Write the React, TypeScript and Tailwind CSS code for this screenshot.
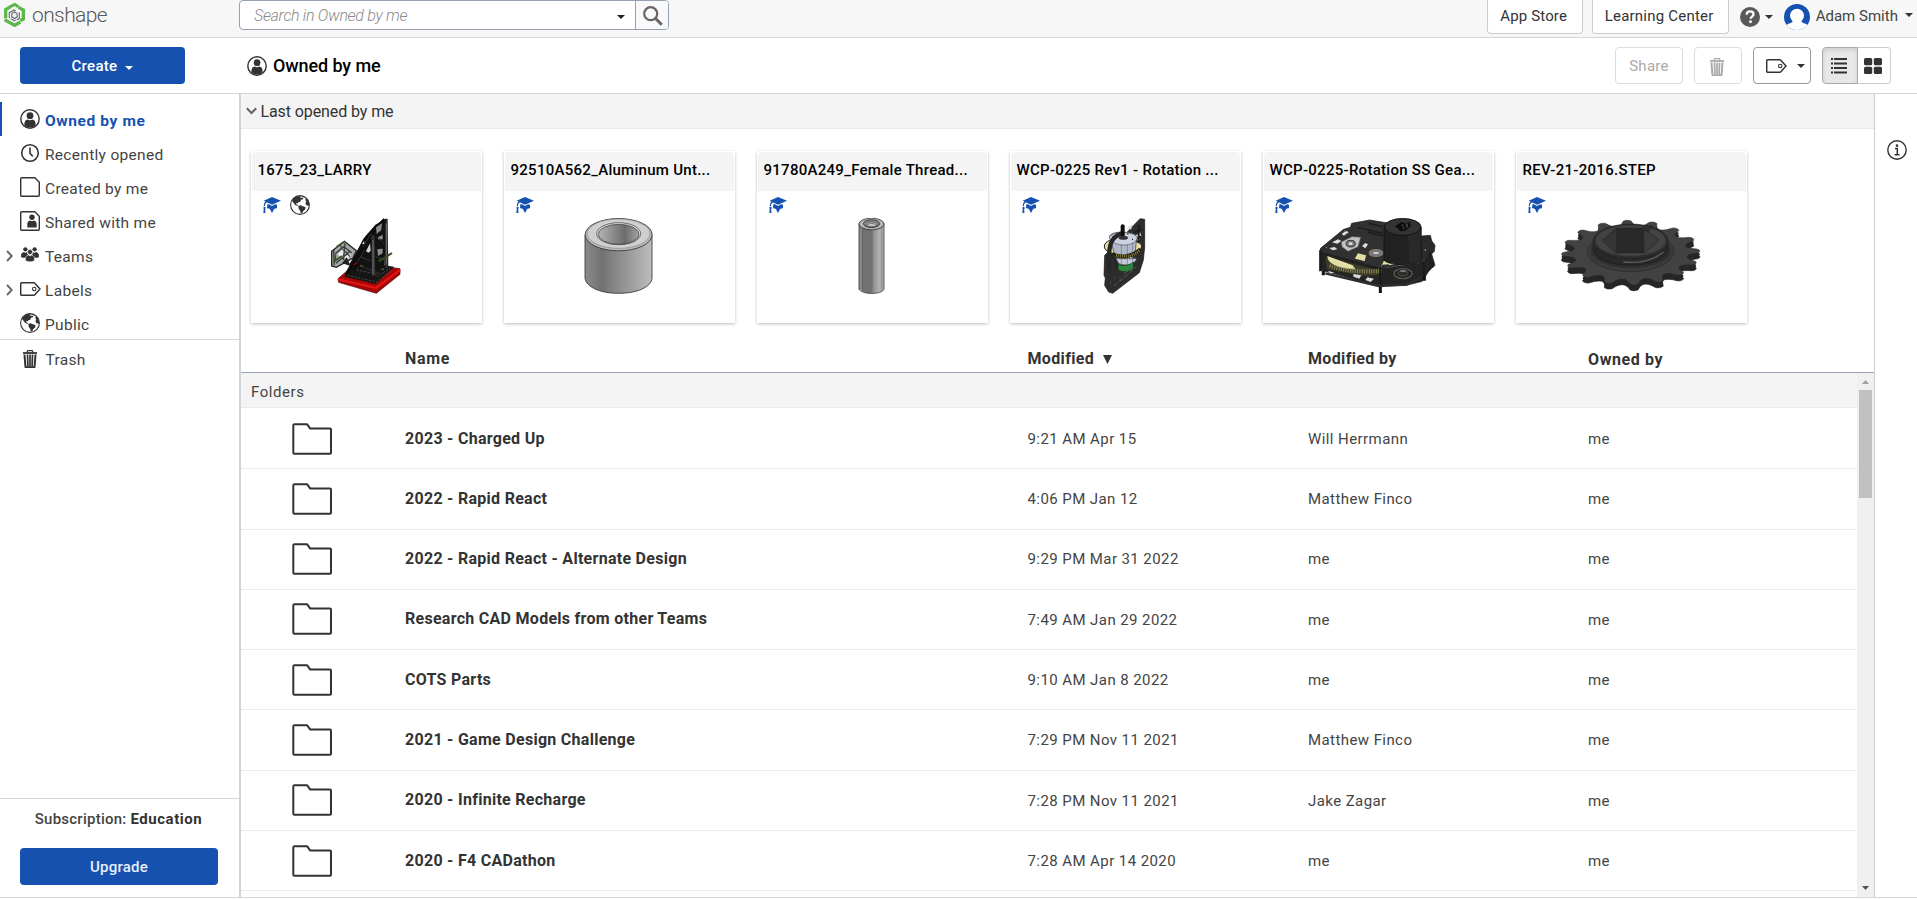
import type { ReactNode } from "react";

const FONT = "font-['Roboto','Liberation_Sans',sans-serif]";

/* ---------- icons ---------- */

function Caret({ className = "" }: { className?: string }) {
  return (
    <svg viewBox="0 0 8 4" className={`h-1 w-2 shrink-0 ${className}`} fill="currentColor">
      <path d="M0 0h8L4 4z" />
    </svg>
  );
}

function Logo() {
  return (
    <svg viewBox="0 0 63 73" className="h-[24.4px] w-[21px] shrink-0" fill="none">
      <path d="M5 46V20L20 11" stroke="#5cb947" strokeWidth="10" />
      <path d="M17 12L32 4l12 8" stroke="#5cb947" strokeWidth="9" />
      <path d="M44 13l14 8v27l-9 5" stroke="#5cb947" strokeWidth="10" />
      <path d="M2 50l30 17 17-10" stroke="#5cb947" strokeWidth="10" />
      <path d="M16 46V29l14-8 5 3M46 28v18l-8 5M20 47l11 6 4-2" stroke="#6b6c70" strokeWidth="3.500" />
      <path d="M31.500 27l8 4.500v10l-8 5-8-5v-10z" stroke="#6b6c70" strokeWidth="3.500" />
    </svg>
  );
}

function UserCircle() {
  return (
    <svg viewBox="0 0 20 20" className="size-5 shrink-0">
      <circle cx="10" cy="10" r="9.200" fill="none" stroke="#333" strokeWidth="1.400" />
      <circle cx="10" cy="6.700" r="3.400" fill="#333" />
      <path d="M4.300 16.200C4.300 12.600 5.600 11 7.600 10.600c1.500.9 3.300.9 4.800 0 2 .4 3.300 2 3.300 5.600C12.500 19.200 7.500 19.200 4.300 16.200z" fill="#333" />
    </svg>
  );
}

function Clock() {
  return (
    <svg viewBox="0 0 20 20" className="size-5 shrink-0" fill="none" stroke="#333">
      <circle cx="10" cy="10" r="8.300" strokeWidth="1.600" />
      <path d="M10 4.500v5.700l2.800 3.400" strokeWidth="1.600" />
    </svg>
  );
}

function Page({ children }: { children?: ReactNode }) {
  return (
    <svg viewBox="0 0 20 20" className="size-5 shrink-0">
      <path d="M1.700.7H14.800L19.300 5.200V18.300a1 1 0 0 1-1 1H1.700a1 1 0 0 1-1-1V1.700a1 1 0 0 1 1-1z" fill="none" stroke="#333" strokeWidth="1.400" />
      {children}
    </svg>
  );
}

function Teams() {
  return (
    <svg viewBox="0 0 54 46" className="h-[15.3px] w-5 shrink-0" fill="#333">
      <circle cx="13" cy="7" r="6.500" />
      <circle cx="41" cy="7" r="6.500" />
      <path d="M0 29c0-9 3-13 9-14l5 3 4-3c1 4 1 7 4 9-5 2-7 4-8 8-6 0-14 0-14-3z" />
      <path d="M54 29c0-9-3-13-9-14l-5 3-4-3c-1 4-1 7-4 9 5 2 7 4 8 8 6 0 14 0 14-3z" />
      <circle cx="27" cy="15" r="7.500" stroke="#fff" strokeWidth="1.500" />
      <path d="M13 40c0-10 3-15 9-16l5 3 5-3c6 1 9 6 9 16-6 6-22 6-28 0z" stroke="#fff" strokeWidth="1.500" />
    </svg>
  );
}

function Tag() {
  return (
    <svg viewBox="0 0 21 14" className="h-3.5 w-[21px] shrink-0" fill="none" stroke="#333">
      <path d="M1.700.8h12.100c.5 0 .9.200 1.200.6L20 7l-5 5.600c-.3.400-.7.600-1.200.6H1.700a1 1 0 0 1-1-1V1.800a1 1 0 0 1 1-1z" strokeWidth="1.500" />
      <circle cx="14.200" cy="7" r="1.700" strokeWidth="1.100" />
    </svg>
  );
}

function Globe() {
  return (
    <svg viewBox="0 0 20 20" className="size-5 shrink-0">
      <circle cx="10" cy="10" r="9.400" fill="#fff" stroke="#333" strokeWidth="1.100" />
      <path d="M3.400 3.600C5.500 1.600 8 .7 10.800.8l-1 1.600 1.900.3 1.900-.3-.8 1.900-1.800.5-.7 1.900-1.900.5-1 1.400-1.100-.4-.6.700 1.500.9 1.400.7-1.500.3-2-.8L3.700 8 2 5.900z" fill="#333" />
      <path d="M8.200 10.900l2.300-.7 2.500 1.100 2.600 1-.5 2.200-1.800 1.400-.9 2.100-1.600.6-.5-2.700-1.500-1.900z" fill="#333" />
      <path d="M16 2.900l-.7 2.200 1 1.600-.9 1.300.9 2.200 2.600.6c.8-3.200-.2-6-2.900-7.900z" fill="#333" />
    </svg>
  );
}

function Trash({ color = "#333" }: { color?: string }) {
  return (
    <svg viewBox="0 0 14 18" className="h-[18px] w-3.5 shrink-0" fill="none" stroke={color}>
      <path d="M4.300 2.400V1.300c0-.4.300-.7.700-.7h4c.4 0 .7.300.7.700v1.100" strokeWidth="1.200" />
      <path d="M0 3h14" strokeWidth="1.800" />
      <path d="M1.500 4.500l.9 12c0 .5.300.7.700.7h7.800c.4 0 .7-.2.700-.7l.9-12" strokeWidth="2" />
      <path d="M4.500 4.500l.4 12M7 4.500v12M9.500 4.500l-.4 12" strokeWidth="1.700" />
    </svg>
  );
}

function GradCap() {
  return (
    <svg viewBox="0 0 54 48" className="h-4 w-[18px] shrink-0" fill="#1651b0">
      <path d="M27 0l27 11-27 12L2 11z" />
      <path d="M13 22l5 0 9 5 9-5 6 1c0 7 1 10-1 11-3 1-6 0-8 3l-6 11-6-11c-2-3-5-2-8-3-2-1 0-5 0-12z" />
      <path d="M13 14C7 15 4 18 4 28" fill="none" stroke="#1651b0" strokeWidth="3.500" />
      <path d="M1.500 30h6v5l-1 3 1 10H1l1-10z" />
    </svg>
  );
}

function Chevron({ down = false }: { down?: boolean }) {
  return down ? (
    <svg viewBox="0 0 11 8" className="h-2 w-[11px] shrink-0" fill="none" stroke="#666" strokeWidth="2.100">
      <path d="M.8 1.200L5.500 6 10.200 1.200" />
    </svg>
  ) : (
    <svg viewBox="0 0 7 12" className="h-3 w-[7px] shrink-0" fill="none" stroke="#666" strokeWidth="1.900">
      <path d="M1 1l4.800 5L1 11" />
    </svg>
  );
}

function Folder() {
  return (
    <svg viewBox="0 0 40 32" className="h-8 w-10 shrink-0" fill="none" stroke="#333" strokeWidth="2" strokeLinejoin="round">
      <path d="M2.300 1.300H15.200L18.300 5.600H38a1 1 0 0 1 1 1V29.700a1 1 0 0 1-1 1H2.300a1 1 0 0 1-1-1V2.300a1 1 0 0 1 1-1z" />
    </svg>
  );
}

/* ---------- part thumbnails ---------- */

const thumb = "block h-[105px] w-full";

function RobotThumb() {
  return (
    <svg viewBox="63 384 693 315" className={thumb}>
      <path d="M324 566l56-48 130 18v17l-71 57-113-33z" fill="#a80505" stroke="#400" strokeWidth="2" />
      <path d="M324 568l114 26 72-54" fill="none" stroke="#e01414" strokeWidth="7" />
      <path d="M346 550l36-36 110 16-54 52-94-22z" fill="#161616" />
      <path d="M352 556l88 20 44-34M380 540l60 12M400 530l50 22M440 560l40-24" stroke="#5c5c5c" strokeWidth="2" fill="none" strokeDasharray="7 4" />
      <path d="M305 484l38-30 36 28-10 22-50 28-14-4z" fill="#a4a8a8" stroke="#222" strokeWidth="4" />
      <path d="M322 492l14-12 8 8-12 14zM342 500l16-10 6 8-14 8zM340 470l10 6-6 6z" fill="#eee" />
      <path d="M315 492l26-22 24 18M311 480l2 46M330 466l30 34M318 520l40-34M345 460l-5 50" stroke="#3a3a3a" strokeWidth="4" fill="none" />
      <path d="M310 516l26-18M320 470l20-13M316 494v20" stroke="#35521f" strokeWidth="5" />
      <path d="M336 520l26 8-12-26z" fill="#222" />
      <path d="M464 386l9 0 2 150-10-2z" fill="#2b2b2b" />
      <path d="M372 500l28-54 36-42 30-16v70l-2 76-34 4-72-16z" fill="#121212" />
      <path d="M350 552l62-112 52-52M370 540l58-104" stroke="#0c0c0c" strokeWidth="10" fill="none" />
      <path d="M438 412l18-12-2 20-14 12zM444 442l14-8v14h-14zM442 478l16-2v14l-14 8z" fill="#8d8d8d" />
      <path d="M408 484l12-24 2 22-6 6zM396 462l6-8 2 8z" fill="#d6d6d6" />
      <path d="M424 436l10 0 2 122-10-2z" fill="#303030" />
      <path d="M429 450v104M469 400v124" stroke="#808080" strokeWidth="2.500" />
      <path d="M398 470l26-40M380 520l24-40M442 440l20 20M436 500l28 10M390 500l30 12" stroke="#4a4a4a" strokeWidth="2" />
      <path d="M446 514l40-25" stroke="#304d1c" strokeWidth="6" />
      <path d="M454 540l8-4M390 526l10 4" stroke="#7a5a18" strokeWidth="4" />
      <path d="M372 524l10-6" stroke="#c00" strokeWidth="3" />
    </svg>
  );
}

function SpacerThumb() {
  return (
    <svg viewBox="822 384 693 315" className={thumb}>
      <defs>
        <linearGradient id="spacer-body">
          <stop offset="0" stopColor="#8a8a8a" />
          <stop offset=".25" stopColor="#727272" />
          <stop offset=".6" stopColor="#959595" />
          <stop offset="1" stopColor="#bdbdbd" />
        </linearGradient>
        <linearGradient id="spacer-bore">
          <stop offset="0" stopColor="#b5b5b5" />
          <stop offset=".65" stopColor="#6b6b6b" />
          <stop offset="1" stopColor="#a5a5a5" />
        </linearGradient>
      </defs>
      <path d="M1065 434V564C1068 592 1112 610 1166 610s98-18 100-46V434z" fill="url(#spacer-body)" stroke="#333" strokeWidth="2.500" />
      <ellipse cx="1166" cy="434" rx="100.500" ry="48.500" fill="#b9b9b9" stroke="#333" strokeWidth="2.500" />
      <ellipse cx="1166" cy="431" rx="94" ry="44" fill="#cfcfcf" stroke="#777" strokeWidth="1.500" />
      <ellipse cx="1166" cy="431" rx="66" ry="33" fill="#dedede" stroke="#333" strokeWidth="2" />
      <ellipse cx="1166" cy="433" rx="61" ry="30" fill="url(#spacer-bore)" stroke="#333" strokeWidth="2" />
    </svg>
  );
}

function StandoffThumb() {
  return (
    <svg viewBox="51 234 693 315" className={thumb}>
      <defs>
        <linearGradient id="standoff-right">
          <stop offset="0" stopColor="#8d8d8d" />
          <stop offset=".6" stopColor="#b2b2b2" />
          <stop offset="1" stopColor="#9d9d9d" />
        </linearGradient>
      </defs>
      <path d="M357 250L367 262v192l-10-6z" fill="#8b8b8b" />
      <path d="M366 260l32 10v190c-14 1-26-2-32-7z" fill="#727272" />
      <path d="M398 270l33-14v192c-6 8-20 12-33 12z" fill="url(#standoff-right)" />
      <path d="M357 250V448C365 464 425 465 432 448V250" fill="none" stroke="#3a3a3a" strokeWidth="2.500" />
      <path d="M367 264v190M398 270v190" stroke="#565656" strokeWidth="1.500" />
      <path d="M425 262v190" stroke="#7c7c7c" strokeWidth="1.500" />
      <ellipse cx="394.500" cy="252" rx="37.500" ry="17.500" fill="#b5b5b5" stroke="#333" strokeWidth="2.500" />
      <ellipse cx="394.500" cy="251" rx="24" ry="11.500" fill="#8f8f8f" stroke="#222" strokeWidth="2.500" />
      <ellipse cx="395" cy="253" rx="17" ry="7" fill="#c7c7c7" stroke="#444" strokeWidth="2" />
      <path d="M380 255c8-6 22-6 30 0" fill="none" stroke="#444" strokeWidth="2" />
    </svg>
  );
}

function RotationThumb() {
  return (
    <svg viewBox="810 234 693 315" className={thumb}>
      <path d="M1110 330l90-94 14 2v84l-4 38-12 38-80 62-12-4-12-20 2-22-4-8 2-60z" fill="#2d2d2d" stroke="#141414" strokeWidth="2" />
      <path d="M1188 286l12-10 4 12-10 18zM1158 268l20-18-4 18z" fill="#dcdcdc" />
      <path d="M1182 278l22-10M1186 296l18-6M1196 254v60" stroke="#1c1c1c" strokeWidth="6" />
      <path d="M1093 318c4-18 20-20 60-18 36 2 52 10 52 18 0 16-24 28-56 28-30 0-58-12-56-28z" fill="#e2dca2" stroke="#222" strokeWidth="3" />
      <path d="M1108 288c10-16 66-16 82 2l-4 46-18 38h-30l-14-30z" fill="#b1b8ca" stroke="#333" strokeWidth="2" />
      <path d="M1108 292c4-16 70-22 84 0-4 30-74 32-84 0z" fill="#ccd2e2" stroke="#555" strokeWidth="2" />
      <path d="M1128 356h50c16-4 14 6-2 16-14 4-32 4-40-2z" fill="#c4cadb" stroke="#444" strokeWidth="2" />
      <path d="M1144 312v60M1162 314v60M1178 308v60" stroke="#6d7384" strokeWidth="2" />
      <path d="M1116 342c26 12 60 10 86-14" fill="none" stroke="#26240f" strokeWidth="12" />
      <path d="M1128 346c24 6 50 4 70-14" fill="none" stroke="#b3ab62" strokeWidth="8" strokeDasharray="2 4" />
      <path d="M1134 372c14 8 32 6 46-6v20c-8 10-36 12-46 2z" fill="#2b8a3e" stroke="#123c1a" strokeWidth="2" />
      <path d="M1108 400V340c0-34 12-54 44-62" fill="none" stroke="#262626" strokeWidth="13" />
      <path d="M1120 348l12 40" stroke="#262626" strokeWidth="8" />
      <path d="M1148 259v30" stroke="#0d0d0d" strokeWidth="12" strokeLinecap="round" />
      <ellipse cx="1150" cy="293" rx="14" ry="6" fill="#333" />
      <path d="M1118 290h3M1176 298h3M1162 282h3" stroke="#222" strokeWidth="4" />
      <path d="M1122 438l66-56M1110 428h3M1124 412h3M1138 414h3M1152 400l30-22" stroke="#5e5e5e" strokeWidth="3" strokeDasharray="14 6" />
    </svg>
  );
}

function GearboxThumb() {
  return (
    <svg viewBox="69 234 693 315" className={thumb}>
      <path d="M545 288l26-2 4 16 10 14-2 18-8 8 10 34-18 16-30 6z" fill="#2a2a2a" stroke="#151515" strokeWidth="2" />
      <path d="M241 326l70-58 20-6 4-12 54-10 60 10v120l-30 30-170-40z" fill="#313131" stroke="#161616" strokeWidth="2" />
      <path d="M241 336l182 50 134-20 14-30v50l-24 38-48 12-80 2-178-48z" fill="#242424" stroke="#121212" strokeWidth="2" />
      <path d="M256 350l164 42v12l-50 4-110-20z" fill="#3d3c28" />
      <path d="M262 348l76 28 8 12c-40 0-84-14-84-40z" fill="#e3dfa4" />
      <path d="M270 376c30 14 90 22 156 16" fill="none" stroke="#8f8b58" strokeWidth="13" strokeDasharray="3 4" />
      <path d="M342 360l12-20 24 6-4 18zM426 374l6-12 24 10z" fill="#e3dfa4" />
      <path d="M264 392l20 6-14 2zM340 402l24 4-6 10-18-6zM382 412l20 4-10 10-16-6z" fill="#d9d9d9" />
      <path d="M276 307l18-9 10 5-12 8zM302 280l18-7 6 4-14 10zM268 324l16-3 8 7-14 3zM366 318l10-9 8 4-8 12z" fill="#dedede" />
      <path d="M304 306l32-16 26 2-8 28-30 14-18-14z" fill="#c4c4c4" stroke="#666" strokeWidth="2" />
      <ellipse cx="332" cy="311" rx="14" ry="10" fill="#777" stroke="#333" strokeWidth="3" />
      <ellipse cx="332" cy="311" rx="6" ry="4" fill="#ddd" />
      <ellipse cx="408" cy="339" rx="24" ry="14" fill="#7e776d" stroke="#2a2a2a" strokeWidth="3" />
      <ellipse cx="408" cy="339" rx="10" ry="5" fill="#c4d2ea" stroke="#555" strokeWidth="2" />
      <path d="M352 262l76 18M386 250l40 10M384 276l44 12" stroke="#1c1c1c" strokeWidth="4" />
      <path d="M242 332l180 48M242 328l72-58M426 382l130-22" stroke="#303030" strokeWidth="7" />
      <path d="M432 262v98c10 18 102 18 112 0V262z" fill="#212121" stroke="#111" strokeWidth="2" />
      <path d="M504 284l38-14v92l-34 10z" fill="#292929" />
      <ellipse cx="488" cy="261" rx="55" ry="25.500" fill="#333" stroke="#111" strokeWidth="3" />
      <path d="M464 260l20-14 12 4 14-4 2 12-16 14-16 2-4-8z" fill="#0c0c0c" />
      <path d="M486 252l6 16M496 250l6 14M504 250l-4 10" stroke="#666" strokeWidth="2" />
      <ellipse cx="489" cy="401" rx="27" ry="15" fill="#1e1e1e" stroke="#5f5950" strokeWidth="4" />
      <ellipse cx="489" cy="400" rx="15" ry="8" fill="#2c2c2c" stroke="#666" strokeWidth="2" />
      <path d="M481 393h16" stroke="#8597b3" strokeWidth="4" />
      <path d="M241 330v64M421 384v60M552 368v40M578 364v18" stroke="#1b1b1b" strokeWidth="7" />
      <path d="M250 392v14M421 440v19M553 408v14" stroke="#111" strokeWidth="9" />
      <path d="M256 400l160 38 84-4 48-24" stroke="#2e2e2e" strokeWidth="7" fill="none" />
      <path d="M258 322l2 1M312 272l2 1M424 376l2 1M554 330h4" stroke="#aaa" strokeWidth="4" />
    </svg>
  );
}

/** Outline of the sprocket's toothed face, as an ellipse seen at an angle. */
function sprocketPath(cx: number, cy: number, rx: number, ry: number, teeth: number) {
  const at = (deg: number, k: number) => {
    const a = (deg * Math.PI) / 180;
    return `${(cx + rx * k * Math.cos(a)).toFixed(1)} ${(cy + ry * k * Math.sin(a)).toFixed(1)}`;
  };
  const step = 360 / teeth;
  let d = "";
  for (let i = 0; i < teeth; i++) {
    const c = -93 + i * step;
    d += `${i ? "L" : "M"}${at(c - step * 0.25, 0.89)}L${at(c - step * 0.15, 0.98)}Q${at(c, 1.03)} ${at(c + step * 0.15, 0.98)}`;
    d += `L${at(c + step * 0.25, 0.89)}Q${at(c + step * 0.5, 0.76)} ${at(c + step * 0.75, 0.89)}`;
  }
  return d + "Z";
}

const SPROCKET_TOP = sprocketPath(1172, 338, 207, 97, 16);
const SPROCKET_MID = sprocketPath(1172, 347, 207, 97, 16);
const SPROCKET_LOW = sprocketPath(1172, 355, 207, 97, 16);

function SprocketThumb() {
  return (
    <svg viewBox="828 234 693 315" className={thumb}>
      <path d={SPROCKET_LOW} fill="#262626" stroke="#1b1b1b" strokeWidth="2" />
      <path d={SPROCKET_MID} fill="#262626" />
      <path d={SPROCKET_TOP} fill="#424242" stroke="#222" strokeWidth="1.500" />
      <ellipse cx="1172" cy="334" rx="130" ry="61" fill="#3a3a3a" stroke="#282828" strokeWidth="2" />
      <ellipse cx="1172" cy="331" rx="122" ry="56" fill="#303030" stroke="#484848" strokeWidth="1.500" />
      <path d="M1060 304v24c10 64 214 64 224 0v-24z" fill="#292929" stroke="#1a1a1a" strokeWidth="2" />
      <path d="M1150 366c44 4 90-4 120-30" fill="none" stroke="#5c5c5c" strokeWidth="4" />
      <ellipse cx="1172" cy="304" rx="113" ry="52" fill="#2e2e2e" stroke="#1c1c1c" strokeWidth="1.500" />
      <ellipse cx="1172" cy="302" rx="106" ry="47" fill="#434343" stroke="#2a2a2a" strokeWidth="1.500" />
      <path d="M1128 265h84l45 36-44 37h-85l-42-36z" fill="#2b2b2b" stroke="#151515" strokeWidth="2" />
      <path d="M1128 265v73l-42-36z" fill="#353535" />
      <path d="M1128 265h84v73h-84z" fill="#292929" />
      <path d="M1212 265l45 36-44 37z" fill="#3c3c3c" />
      <path d="M1204 268l10-12 22 4-12 14z" fill="#303030" stroke="#1a1a1a" strokeWidth="2" />
    </svg>
  );
}

/* ---------- data ---------- */

const NAV: { label: string; icon: ReactNode; active?: boolean; expandable?: boolean }[] = [
  { label: "Owned by me", icon: <UserCircle />, active: true },
  { label: "Recently opened", icon: <Clock /> },
  { label: "Created by me", icon: <Page /> },
  {
    label: "Shared with me",
    icon: (
      <Page>
        <circle cx="12" cy="6.300" r="2.700" fill="#333" />
        <path d="M7.300 16.500v-3.300C7.300 11 8.300 9.800 10 9.500c1.300.7 2.700.7 4 0 1.700.3 2.700 1.500 2.700 3.700v3.300z" fill="#333" />
      </Page>
    ),
  },
  { label: "Teams", icon: <Teams />, expandable: true },
  { label: "Labels", icon: <Tag />, expandable: true },
  { label: "Public", icon: <Globe /> },
];

const CARDS: { title: string; art: ReactNode; isPublic?: boolean }[] = [
  { title: "1675_23_LARRY", art: <RobotThumb />, isPublic: true },
  { title: "92510A562_Aluminum Unt...", art: <SpacerThumb /> },
  { title: "91780A249_Female Thread...", art: <StandoffThumb /> },
  { title: "WCP-0225 Rev1 - Rotation ...", art: <RotationThumb /> },
  { title: "WCP-0225-Rotation SS Gea...", art: <GearboxThumb /> },
  { title: "REV-21-2016.STEP", art: <SprocketThumb /> },
];

const ROWS = [
  ["2023 - Charged Up", "9:21 AM Apr 15", "Will Herrmann", "me"],
  ["2022 - Rapid React", "4:06 PM Jan 12", "Matthew Finco", "me"],
  ["2022 - Rapid React - Alternate Design", "9:29 PM Mar 31 2022", "me", "me"],
  ["Research CAD Models from other Teams", "7:49 AM Jan 29 2022", "me", "me"],
  ["COTS Parts", "9:10 AM Jan 8 2022", "me", "me"],
  ["2021 - Game Design Challenge", "7:29 PM Nov 11 2021", "Matthew Finco", "me"],
  ["2020 - Infinite Recharge", "7:28 PM Nov 11 2021", "Jake Zagar", "me"],
  ["2020 - F4 CADathon", "7:28 AM Apr 14 2020", "me", "me"],
];

const COLS = "grid grid-cols-[164px_622.5px_280.5px_280px_1fr]";

/* ---------- sections ---------- */

function TopBar() {
  return (
    <header className="flex h-[38px] shrink-0 border-b border-[#cfd8e0] bg-[#f7f7f7]">
      <div className="flex h-[30px] w-[239px] items-center gap-[7px] pl-1">
        <Logo />
        <span className="text-[21px] leading-none font-light tracking-[-0.6px] text-[#58595b]">onshape</span>
      </div>
      <div className="flex h-[30px] w-[430px] rounded-[4px] border border-[#97a2b0] bg-white">
        <div className="flex flex-1 items-center justify-between pr-2.5 pl-3.5">
          <span className="pt-0.5 text-base font-light tracking-[-0.31px] text-[#8a8a8a] italic">Search in Owned by me</span>
          <Caret className="mt-1 text-[#222]" />
        </div>
        <div className="flex w-[33px] items-center justify-center rounded-r-[3px] border-l border-[#97a2b0] bg-[#f9f9f9] pt-0.5 pl-0.5">
          <svg viewBox="0 0 20 20" className="size-5" fill="none" stroke="#666">
            <circle cx="7.700" cy="7.700" r="6.500" strokeWidth="2.200" />
            <path d="M12.300 12.300l6.500 6.500" strokeWidth="3" />
          </svg>
        </div>
      </div>
      <div className="ml-auto flex">
        <div className="flex h-[34px] w-24 justify-center rounded-b-[4px] border border-t-0 border-[#ccc] bg-white pt-[5px] pr-0.5 text-[15px] leading-[22px] tracking-[0.15px] text-[#333]">App Store</div>
        <div className="ml-[9px] flex h-[34px] w-[137px] justify-center rounded-b-[4px] border border-t-0 border-[#ccc] bg-white pt-[5px] pr-0.5 text-[15px] leading-[22px] tracking-[0.22px] text-[#333]">Learning Center</div>
        <div className="ml-[11px] flex h-[34px] items-center">
          <svg viewBox="0 0 20 20" className="size-5">
            <circle cx="10" cy="10" r="10" fill="#595959" />
            <path d="M6.600 7.600C6.700 5.500 8 4.400 10.100 4.400c2 0 3.400 1.100 3.400 2.900 0 2.300-2.900 2.400-2.900 4.500" fill="none" stroke="#fff" strokeWidth="2.300" />
            <circle cx="10.500" cy="14.700" r="1.450" fill="#fff" />
          </svg>
          <Caret className="ml-[5px] text-[#333]" />
          <svg viewBox="0 0 78 78" className="ml-[11px] size-[26px]">
            <defs>
              <clipPath id="avatar">
                <circle cx="39" cy="39" r="39" />
              </clipPath>
            </defs>
            <g clipPath="url(#avatar)">
              <path d="M0 0h78v78H0z" fill="#1651b0" />
              <circle cx="39" cy="35" r="21" fill="#fff" />
              <path d="M0 78c2-14 10-18 20-21 6-2 7-6 7-12h24c0 6 1 10 7 12 10 3 18 7 20 21z" fill="#fff" />
            </g>
          </svg>
          <span className="ml-1.5 pb-0.5 text-[15px] leading-[22px] tracking-[0.02px] text-[#444]">Adam Smith</span>
          <Caret className="mr-1 mb-1 ml-[7px] text-[#333]" />
        </div>
      </div>
    </header>
  );
}

function Toolbar() {
  return (
    <div className="flex h-14 shrink-0 items-center border-b border-[#cfd8e0] bg-white">
      <button className="ml-5 flex h-[37px] w-[165px] items-center justify-center gap-2 rounded-[4px] bg-[#1651b0] pt-0.5 text-[15px] font-medium tracking-[0.3px] text-white">
        Create <Caret className="mt-0.5" />
      </button>
      <div className="ml-[62px] flex items-center gap-1.5">
        <UserCircle />
        <h1 className="text-[18px] leading-6 font-medium tracking-[-0.1px] text-black">Owned by me</h1>
      </div>
      <div className="mr-[26px] ml-auto flex h-[37px]">
        <button className="w-[68px] rounded-[4px] border border-[#ddd] pt-px text-[15px] tracking-[0.3px] text-[#aaa]">Share</button>
        <button className="ml-[11px] flex w-12 items-center justify-center rounded-[4px] border border-[#ddd] pt-0.5 pr-0.5">
          <Trash color="#aaa" />
        </button>
        <button className="ml-[11px] flex w-[58px] items-center rounded-[4px] border border-[#999] pl-3">
          <Tag />
          <Caret className="ml-2.5 text-[#333]" />
        </button>
        <button className="ml-[11px] flex w-9 items-center justify-center rounded-l-[4px] border border-[#aaa] bg-[#e8e8e8] pt-px pr-0.5 shadow-[inset_0_2px_4px_rgba(0,0,0,0.12)]">
          <svg viewBox="0 0 16 16" className="size-4" fill="#333">
            <path d="M0 0h2v2H0zM3 0h13v2H3zM0 4.500h2v2H0zM3 4.500h13v2H3zM0 9h2v2H0zM3 9h13v2H3zM0 13.500h2v2H0zM3 13.500h13v2H3z" />
          </svg>
        </button>
        <button className="flex w-[33px] items-center justify-center rounded-r-[4px] border border-l-0 border-[#ccc] pt-px pr-0.5">
          <svg viewBox="0 0 18 16" className="h-4 w-[18px]" fill="#333">
            <rect width="8.200" height="7.200" rx="1.500" />
            <rect x="9.800" width="8.200" height="7.200" rx="1.500" />
            <rect y="8.800" width="8.200" height="7.200" rx="1.500" />
            <rect x="9.800" y="8.800" width="8.200" height="7.200" rx="1.500" />
          </svg>
        </button>
      </div>
    </div>
  );
}

function NavRow({ label, icon, active, expandable }: (typeof NAV)[number]) {
  return (
    <li className={`flex h-[34px] items-center border-l-2 ${active ? "border-[#1651b0]" : "border-transparent"}`}>
      <span className="flex w-[18px] items-center pt-px pl-1">{expandable && <Chevron />}</span>
      <span className="flex w-[25px] items-center">{icon}</span>
      <span
        className={
          active
            ? "pt-[3px] text-[15.5px] leading-6 font-bold tracking-[0.6px] text-[#1651b0]"
            : "pt-[3px] text-[15.5px] leading-6 tracking-[0.3px] text-[#444]"
        }
      >
        {label}
      </span>
    </li>
  );
}

function Sidebar() {
  return (
    <nav className="flex w-[241px] shrink-0 flex-col border-r-2 border-[#ced6dd] bg-white">
      <ul className="h-[246px] border-b border-[#cfd8e0] pt-2">
        {NAV.map((item) => (
          <NavRow key={item.label} {...item} />
        ))}
      </ul>
      <div className="flex h-[37px] items-center pl-[22.5px]">
        <Trash />
        <span className="mt-0.5 ml-[9px] text-[15.5px] leading-6 tracking-[0.3px] text-[#444]">Trash</span>
      </div>
      <div className="mt-auto flex h-[99px] flex-col border-t border-[#cfd8e0] pt-2.5 pl-5">
        <p className="w-[197px] text-center text-[15px] leading-5 font-medium tracking-[0.24px] text-[#444]">
          Subscription: <b className="font-bold tracking-[0.54px] text-[#333]">Education</b>
        </p>
        <button className="mt-[19px] h-[37px] w-[198px] rounded-[4px] bg-[#1651b0] pt-0.5 text-[15px] font-medium tracking-[0.2px] text-[#e8eef8]">
          Upgrade
        </button>
      </div>
    </nav>
  );
}

function Recents() {
  return (
    <section>
      <div className="flex h-[35px] items-center border-b border-[#e9e9e9] bg-[#f4f4f4] pl-[5px] text-base tracking-[-0.1px] text-[#333]">
        <Chevron down />
        <span className="ml-[3.500px] pt-0.5">Last opened by me</span>
      </div>
      <div className="flex gap-[22px] px-2.5 pt-[22px]">
        {CARDS.map((card) => (
          <article key={card.title} className="h-[172px] w-[231px] bg-white p-px shadow-[0_1px_3px_rgba(0,0,0,0.26)]">
            <h2 className="h-[39px] rounded-t-[4px] bg-[#f4f4f4] pl-[5.500px] text-[15px] leading-[37px] font-medium tracking-[0.28px] whitespace-nowrap text-black">
              {card.title}
            </h2>
            <div className="-mx-px">
              <div className="flex h-[27px] items-center gap-[9px] pl-3">
                <GradCap />
                {card.isPublic && <Globe />}
              </div>
              {card.art}
            </div>
          </article>
        ))}
      </div>
    </section>
  );
}

function DocumentTable() {
  return (
    <section className="flex min-h-0 flex-1 flex-col">
      <div className={`${COLS} h-[50px] shrink-0 items-end border-b border-[#98a4b3] pb-px text-base leading-6 font-bold tracking-[0.35px] text-[#333]`}>
        <span />
        <span className="tracking-[0.7px]">Name</span>
        <span className="flex items-center gap-[9px]">
          Modified
          <svg viewBox="0 0 9 9" className="mt-px h-[9px] w-[9px]" fill="#333">
            <path d="M0 0h9L4.500 9z" />
          </svg>
        </span>
        <span>Modified by</span>
        <span className="-mb-px tracking-[0.6px]">Owned by</span>
      </div>
      <div className="flex min-h-0 flex-1">
        <div className="min-w-0 flex-1 overflow-hidden">
          <h3 className="mb-px h-[35px] border-b border-[#e9e9e9] bg-[#f4f4f4] pl-2.5 text-[15px] leading-[39px] tracking-[0.55px] text-[#444]">Folders</h3>
          {ROWS.map(([name, modified, by, owner]) => (
            <div key={name} className={`${COLS} h-[60.29px] items-center border-b border-[#ebebeb] text-[15px] tracking-[0.42px] text-[#444]`}>
              <span className="pl-[50.500px]">
                <Folder />
              </span>
              <span className="text-base font-bold tracking-[0.28px] text-[#333]">{name}</span>
              <span className="pt-px">{modified}</span>
              <span className="pt-px">{by}</span>
              <span className="pt-px">{owner}</span>
            </div>
          ))}
        </div>
        <div className="flex w-[17px] shrink-0 flex-col items-center bg-[#f0f0f0] py-[7px]">
          <svg viewBox="0 0 7 4" className="h-1 w-[7px]" fill="#a0a0a0">
            <path d="M3.500 0L7 4H0z" />
          </svg>
          <div className="mt-1.5 h-[108px] w-[13px] bg-[#c1c1c1]" />
          <svg viewBox="0 0 7 4" className="mt-auto h-1 w-[7px]" fill="#505050">
            <path d="M0 0h7L3.500 4z" />
          </svg>
        </div>
      </div>
    </section>
  );
}

export default function App() {
  return (
    <div className={`${FONT} flex h-[899px] w-[1917px] flex-col overflow-hidden bg-white`}>
      <TopBar />
      <Toolbar />
      <div className="mb-px flex min-h-0 flex-1 border-b border-[#cfd8e0]">
        <Sidebar />
        <main className="flex min-w-0 flex-1 flex-col">
          <Recents />
          <DocumentTable />
        </main>
        <aside className="flex w-[43px] shrink-0 justify-center border-l border-[#ccc] bg-white pt-[46px] pl-0.5">
          <svg viewBox="0 0 20 20" className="size-5" fill="none" stroke="#333">
            <circle cx="10" cy="10" r="9.200" strokeWidth="1.400" />
            <circle cx="10" cy="5.600" r="1.300" fill="#333" stroke="none" />
            <path d="M8 8.600h2.300v6M7.600 14.700h5" strokeWidth="1.500" />
          </svg>
        </aside>
      </div>
    </div>
  );
}
